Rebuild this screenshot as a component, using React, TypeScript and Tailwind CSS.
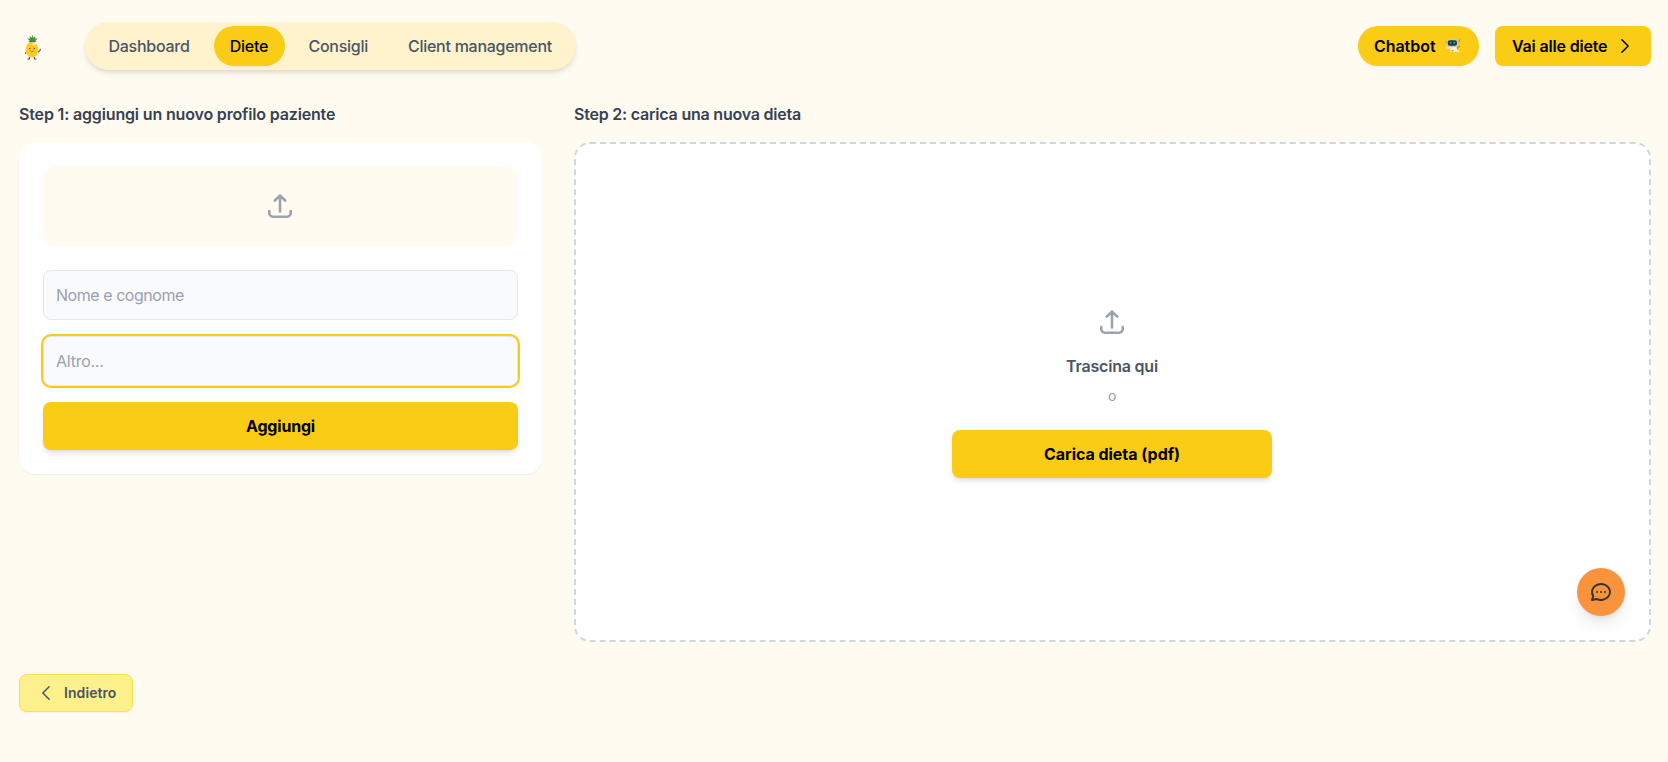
import React from "react";

function Pineapple() {
  return (
    <svg viewBox="0 0 20 27" className="h-[27px] w-5">
      <path d="M9 9.4 5.2 7.4 7 6.4 3.8 4.4l3.2.1-.4-2.2 2 1.2L9.2 1l1.2 2.4 2-1.1-.3 2.200 2.600-.1-2.300 2 1.600.8L10.600 9z" fill="#5c9448" />
      <path d="M9 4v4M6.500 5.500 8 8M11.500 5.500 10 8" stroke="#3b7638" strokeWidth=".8" />
      <path d="M4.800 25h1.600v-2M13 25h-1.600v-2M15 18l1.900-1.300.4-1.300M3.400 18l-1 1.300" fill="none" stroke="#5b5f5c" strokeWidth="1.200" strokeLinecap="round" />
      <ellipse cx="9" cy="15.800" rx="6.400" ry="7.800" fill="#fccb25" />
      <ellipse cx="11.200" cy="10" rx="2.200" ry="1.400" fill="#ffeeab" />
      <circle cx="6.700" cy="14.600" r=".75" fill="#5e4919" />
      <circle cx="11.300" cy="14.600" r=".75" fill="#5e4919" />
      <path d="M7.500 16.900c1 .8 2 .8 3 0" stroke="#8a6518" strokeWidth=".9" fill="none" />
    </svg>
  );
}

function Robot() {
  return (
    <svg viewBox="0 0 16 16" className="size-4">
      <path d="M.8 3.500 2.600 5M15 1.600 13.600 4.500M14.800 8l-2.800 2.500" stroke="#99906a" strokeWidth="1.200" />
      <path d="M.8 9.200 4.500 10.500" stroke="#f2e8c0" strokeWidth="1.800" />
      <rect x="1.600" y="1" width="11.800" height="8" rx="3" fill="#c9cbb5" />
      <rect x="2.800" y="2.200" width="9.200" height="5.600" rx="2.200" fill="#1b3d49" />
      <circle cx="5.500" cy="4.800" r="1" fill="#4a9cab" />
      <circle cx="9.300" cy="4.800" r="1" fill="#4a9cab" />
      <path d="M4.500 9h7l.8 4-2.800 1.200-4-.8z" fill="#fbf1d2" />
      <path d="m6.500 12 1.200 2.400L9 12z" fill="#f5a51c" />
      <path d="m11.500 12.500 2.700 1.500" stroke="#f6ebc4" strokeWidth="1.600" />
    </svg>
  );
}

function Upload() {
  return (
    <svg viewBox="0 0 24 24" fill="none" stroke="#9ca3af" strokeWidth="2.600" strokeLinecap="round" strokeLinejoin="round" className="size-6">
      <path d="M1.300 17v2.200a3.500 3.500 0 0 0 3.500 3.500h14.400a3.500 3.500 0 0 0 3.500-3.500V17M12 17.500V1.600M6.800 6.500 12 1.600l5.200 4.900" />
    </svg>
  );
}

function Chevron({ left = false }: { left?: boolean }) {
  return (
    <svg viewBox="0 0 24 24" fill="none" stroke="currentColor" strokeWidth="1.9" strokeLinecap="round" strokeLinejoin="round" className="size-5">
      <path d={left ? "M15.75 19.5 8.25 12l7.5-7.5" : "m8.25 4.5 7.5 7.5-7.5 7.5"} />
    </svg>
  );
}

export default function App() {
  return (
    <div className="relative h-[762px] w-full overflow-hidden bg-[#fffbf0] pt-[22px] pr-[17px] pl-[19px] font-['Inter',sans-serif] text-base tracking-[-0.2px]">
      <header className="flex h-12 items-center">
        <div className="flex w-[66px] pt-0.5 pl-1">
          <Pineapple />
        </div>
        <nav className="flex h-12 w-[491px] items-center rounded-full bg-[#fff3cd] pl-2 font-medium tracking-[-0.27px] whitespace-nowrap text-gray-600 shadow-md">
          <a className="w-[121px] pl-[15.5px]">Dashboard</a>
          <a className="flex h-10 w-[71px] items-center justify-center rounded-full bg-[#facc15] pr-px text-black">Diete</a>
          <a className="w-[99px] pl-[23.5px]">Consigli</a>
          <a className="pl-6">Client management</a>
        </nav>
        <div className="ml-auto flex gap-4 font-semibold whitespace-nowrap text-black">
          <button className="flex h-10 w-[121px] items-center justify-between rounded-full bg-[#facc15] pr-[18px] pl-4 tracking-[-0.05px] shadow-[0_1px_2px_rgba(0,0,0,0.05)]">
            Chatbot
            <Robot />
          </button>
          <button className="flex h-10 w-[156px] items-center justify-between rounded-lg bg-[#facc15] pr-4 pl-[17px] tracking-[-0.17px] shadow-[0_1px_2px_rgba(0,0,0,0.05)]">
            Vai alle diete
            <Chevron />
          </button>
        </div>
      </header>

      <main className="mt-8 grid grid-cols-[523px_1fr] gap-8">
        <section>
          <h2 className="mb-4 font-semibold tracking-[-0.16px] whitespace-nowrap text-gray-700">Step 1: aggiungi un nuovo profilo paziente</h2>
          <div className="flex h-[332px] flex-col rounded-2xl bg-white p-6 shadow-[0_1px_2px_rgba(0,0,0,0.05)]">
            <div className="mb-6 flex h-20 shrink-0 items-center justify-center rounded-xl bg-[#fffbf0] pr-px">
              <Upload />
            </div>
            <input placeholder="Nome e cognome" className="mb-4 h-[50px] rounded-lg border border-gray-200 bg-gray-50 px-3 tracking-[-0.45px] placeholder:text-gray-400" />
            <input placeholder="Altro..." className="mb-4 h-[50px] rounded-lg border border-gray-200 bg-gray-50 px-3 tracking-[-0.25px] ring-2 ring-[#facc15] placeholder:text-gray-400" />
            <button className="h-12 rounded-lg bg-[#facc15] font-bold text-black shadow-md">Aggiungi</button>
          </div>
        </section>
        <section>
          <h2 className="mb-4 font-semibold tracking-[-0.21px] text-gray-700">Step 2: carica una nuova dieta</h2>
          <div className="flex h-[500px] flex-col items-center rounded-2xl border-2 border-dashed border-gray-300 bg-white pt-[166px] pr-px">
            <Upload />
            <p className="mt-5 font-semibold text-gray-600">Trascina qui</p>
            <p className="mt-2 text-sm leading-5 text-gray-400">o</p>
            <button className="mt-6 h-12 w-80 rounded-lg bg-[#facc15] font-bold tracking-[-0.03px] text-black shadow-md">Carica dieta (pdf)</button>
          </div>
        </section>
      </main>

      <button className="mt-8 flex h-[38px] w-[114px] items-center gap-2 rounded-lg border border-[#fde047] bg-[#fef08a] pl-4 text-sm font-semibold tracking-[0.08px] text-gray-600 shadow-[0_1px_2px_rgba(0,0,0,0.05)]">
        <Chevron left />
        Indietro
      </button>

      <button className="absolute top-[568px] left-[1577px] flex size-12 items-center justify-center rounded-full bg-[#fb923c] shadow-lg">
        <svg viewBox="0 0 24 24" fill="none" stroke="#333" strokeWidth="2" strokeLinecap="round" strokeLinejoin="round" className="size-6">
          <path d="m3 20 1.3-3.9C1.976 12.663 2.874 8.228 6.4 5.726c3.526-2.501 8.59-2.296 11.845.48 3.255 2.777 3.695 7.266 1.029 10.501-2.666 3.235-7.615 4.215-11.574 2.293L3 20M12 12v.01M8 12v.01M16 12v.01" />
        </svg>
      </button>
    </div>
  );
}
